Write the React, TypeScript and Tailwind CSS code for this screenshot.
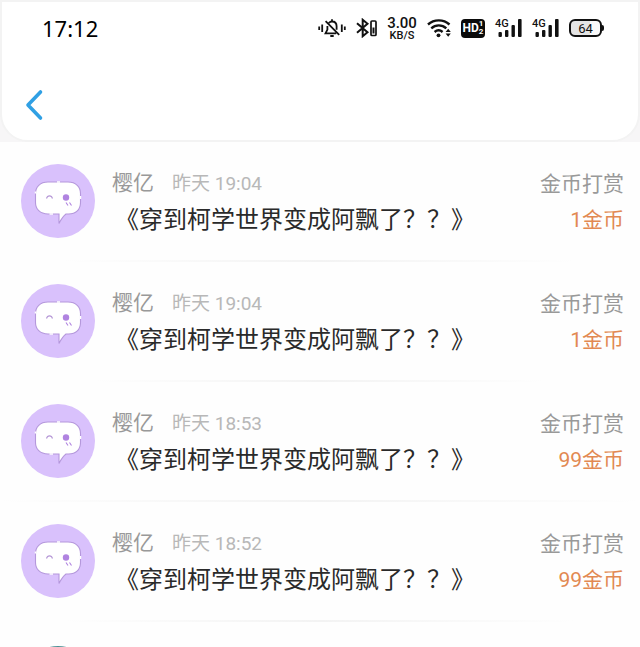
import React from 'react';

interface Reward {
  id: number;
  user: string;
  time: string;
  title: string;
  amount: string;
  divider: string;
}

const BOOK_TITLE = '《穿到柯学世界变成阿飘了？？》';

const REWARDS: Reward[] = [
  { id: 1, user: '樱亿', time: '19:04', title: BOOK_TITLE, amount: '1金币', divider: 'from-10% to-90%' },
  { id: 2, user: '樱亿', time: '19:04', title: BOOK_TITLE, amount: '1金币', divider: 'from-15% to-85%' },
  { id: 3, user: '樱亿', time: '18:53', title: BOOK_TITLE, amount: '99金币', divider: 'from-0% to-100%' },
  { id: 4, user: '樱亿', time: '18:52', title: BOOK_TITLE, amount: '99金币', divider: 'from-10% to-90%' },
];

function MutedBellIcon() {
  return (
    <svg width="28" height="20" viewBox="0 0 28 20" fill="none" stroke="#111" strokeWidth="1.8" aria-hidden="true">
      <path d="M1.200 8.500v3.500M4.200 6.500v7.500M23.800 6.500v7.500M26.800 8.500v3.500" />
      <path d="M10.800 5C11.700 4 12.800 3.500 14 3.500c2.800 0 4.600 2 4.600 4.700v3.600M9.400 8v3.600L7.500 15.400h10.600M14 1.200v2.400M12.300 18h3.400M7.600 3.200l13.600 13.600" />
    </svg>
  );
}

function BluetoothIcon() {
  return (
    <svg width="21" height="20" viewBox="0 0 21 20" fill="none" stroke="#111" strokeWidth="2" aria-hidden="true">
      <path d="M1 5.200l10.500 9-4.800 4V1.800l4.800 4-10.500 9" />
      <rect x="15" y="3" width="5" height="14.500" rx="1" strokeWidth="1.700" />
      <path d="M17.500 9.500v6" strokeWidth="2" />
    </svg>
  );
}

function WifiIcon() {
  return (
    <svg width="24" height="20" viewBox="0 0 24 20" fill="none" stroke="#111" strokeWidth="2.400" aria-hidden="true">
      <path d="M1 6.500c6-5.500 15.500-5.500 21.500 0M4.300 10.300c4.300-3.900 10.600-3.900 15 0M7.600 14c2.500-2.200 5.500-2.200 8 0" />
      <circle cx="11.500" cy="17.300" r="1.900" fill="#111" stroke="none" />
      <path d="M18.600 14l2.600-3.200 2.600 3.200zM18.600 15.600l2.600 3.200 2.600-3.200z" fill="#111" stroke="none" />
    </svg>
  );
}

function HdBadge() {
  return (
    <span className="flex h-[19px] w-6 items-center justify-center rounded bg-[#0a0a0a] font-bold text-white">
      <span className="text-xs leading-none">HD</span>
      <span className="flex flex-col text-[8px] leading-[8px]">
        <span>1</span>
        <span>2</span>
      </span>
    </span>
  );
}

function SignalIcon() {
  return (
    <span className="relative block h-5 w-[27px]">
      <span className="absolute top-0 left-0 text-[11px] leading-[11px] font-medium">4G</span>
      <svg className="size-full" viewBox="0 0 27 20" fill="#111" aria-hidden="true">
        <rect x="3.500" y="14" width="3.400" height="5" rx="1" />
        <rect x="10" y="12" width="3.400" height="7" rx="1" />
        <rect x="16.500" y="7" width="3.400" height="12" rx="1" />
        <rect x="23" y="1" width="3.600" height="18" rx="1" />
      </svg>
    </span>
  );
}

function Battery() {
  return (
    <span className="flex items-center">
      <span className="flex h-[18px] w-[33px] items-center justify-center rounded-md border-2 border-[#111] bg-linear-to-r from-[#e4e4e4] from-64% to-[#fafafa] to-64% text-[13px] leading-none">
        64
      </span>
      <span className="h-1.5 w-0.5 rounded-r bg-[#111]" />
    </span>
  );
}

function StatusBar() {
  return (
    <div className="flex h-[52px] items-center justify-between pr-[34px] pl-10 font-[Roboto,sans-serif] text-[#111]">
      <span className="font-['Noto_Sans',sans-serif] text-[22px] text-black">17:12</span>
      <div className="flex items-center gap-2.5">
        <MutedBellIcon />
        <BluetoothIcon />
        <span className="flex w-[30px] flex-col items-center font-medium">
          <span className="text-[15px] leading-[14px]">3.00</span>
          <span className="text-[11px] leading-[11px]">KB/S</span>
        </span>
        <WifiIcon />
        <HdBadge />
        <SignalIcon />
        <SignalIcon />
        <Battery />
      </div>
    </div>
  );
}

function Avatar() {
  return (
    <svg className="size-[74px] shrink-0" viewBox="0 0 74 74" fill="none" role="img" aria-label="头像">
      <circle cx="37" cy="37" r="37" fill="#d9c1fc" />
      <path
        d="M27 18h20c8 0 12.500 5 12.500 11.500v9c0 7-4.500 11.500-12 11.500H45c-2 1.500-5 5.500-7 9.500V50H27c-8 0-12.500-5-12.500-11.500v-9C14.500 23 19 18 27 18z"
        fill="#fff"
        stroke="#b598dc"
        strokeWidth="1.100"
      />
      <path d="M36 18h3M59.500 32v3M14.500 29.500v-2M28.500 50h3.500" stroke="#fff" strokeWidth="1.500" />
      <path d="M25.500 34.500c1-3.500 5-3.500 6 0" stroke="#b596d6" strokeWidth="1.100" />
      <circle cx="45" cy="33.500" r="3.200" fill="#b083e0" />
      <path d="M45 38.500l2 3M48.500 38.500l2 3" stroke="#b083e0" strokeWidth="1.100" />
    </svg>
  );
}

function RewardRow({ reward }: { reward: Reward }) {
  return (
    <li>
      <div className="flex h-[118px] items-start pt-[22px] pr-4 pl-[21px]">
        <Avatar />
        <div className="ml-[17px] min-w-0 flex-1 pt-0.5">
          <div className="flex h-9 items-center gap-[18px]">
            <span className="text-[21px] text-[#999]">{reward.user}</span>
            <span className="text-[19px] text-[#b8b8b8]">昨天 {reward.time}</span>
          </div>
          <p className="pl-[3px] text-2xl leading-9 whitespace-nowrap text-[#2a2a2a]">{reward.title}</p>
        </div>
        <div className="pt-0.5 text-right text-[21px] leading-9">
          <p className="text-[#999]">金币打赏</p>
          <p className="text-[#e28952]">{reward.amount}</p>
        </div>
      </div>
      <div className={`h-0.5 bg-linear-to-r from-transparent via-[#f3f3f3] to-transparent ${reward.divider}`} />
    </li>
  );
}

export default function App() {
  return (
    <div className="h-screen overflow-hidden bg-[#fefefe] font-[Roboto,'Noto_Sans_CJK_SC',sans-serif]">
      <div className="bg-[#f7f6f7]">
        <header className="rounded-b-[28px] border-2 border-[#f3f3f3] bg-white">
          <StatusBar />
          <div className="flex h-[86px] items-center pt-4 pl-[22px]">
            <button type="button" aria-label="返回" className="flex h-10 items-center">
              <svg width="20" height="32" viewBox="0 0 20 32" fill="none" aria-hidden="true">
                <path
                  d="M16.500 3L4 16l12.500 13"
                  stroke="#30a0e4"
                  strokeWidth="3.600"
                  strokeLinecap="round"
                  strokeLinejoin="round"
                />
              </svg>
            </button>
          </div>
        </header>
      </div>

      <ul>
        {REWARDS.map((reward) => (
          <RewardRow key={reward.id} reward={reward} />
        ))}
        <li className="pt-6 pl-[21px]">
          <div className="size-[74px] rounded-full bg-[#4f9297]" />
        </li>
      </ul>
    </div>
  );
}
